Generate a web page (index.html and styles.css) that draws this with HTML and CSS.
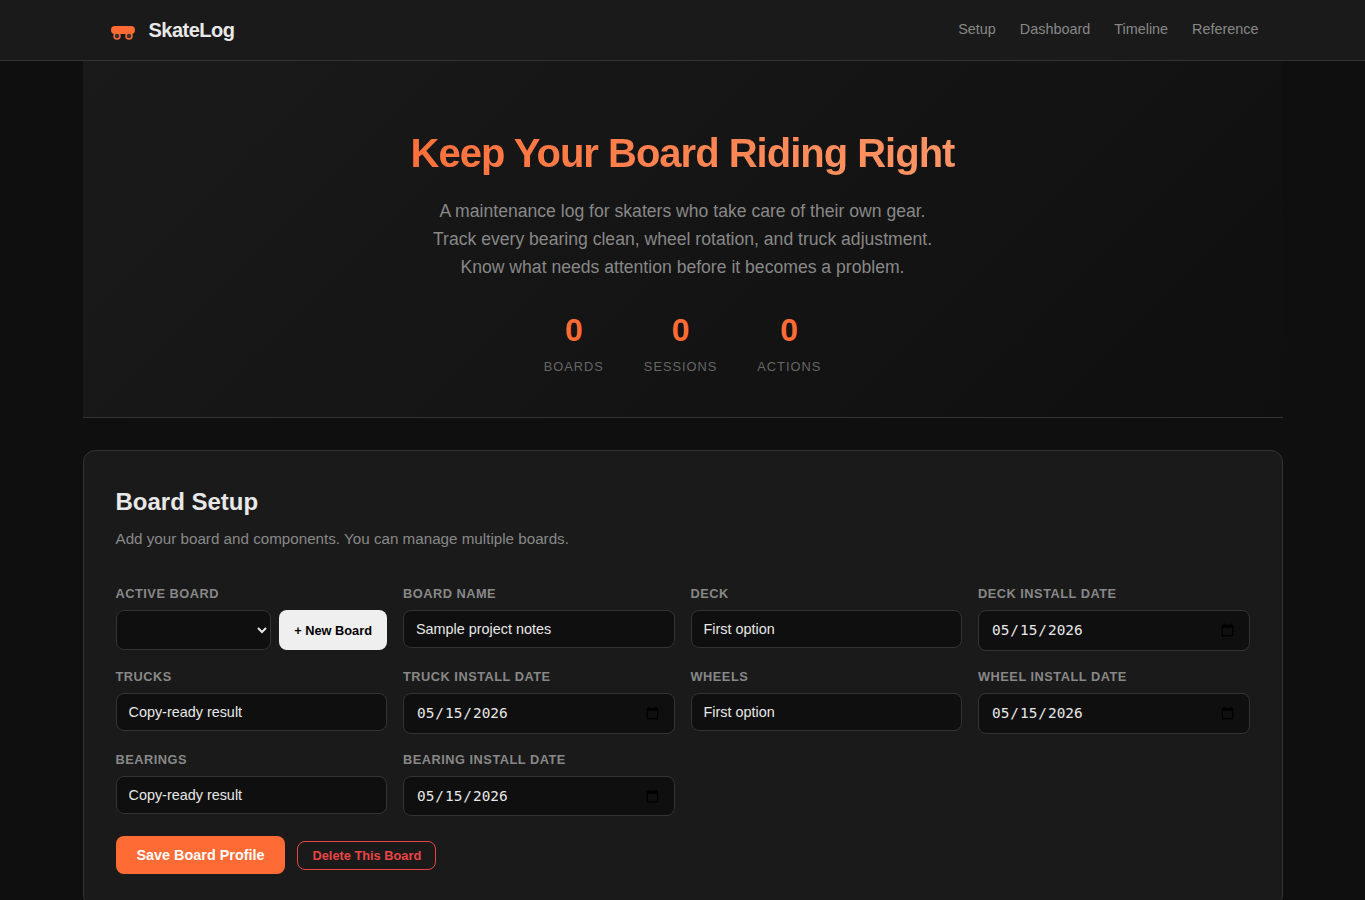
FILE: index.html
```html
<!DOCTYPE html>
<html lang="en">
<head>
  <meta charset="UTF-8">
  <meta name="viewport" content="width=device-width, initial-scale=1.0">
  <title>SkateLog</title>
  <link rel="stylesheet" href="styles.css">
</head>
<body>
  <header class="site-header">
    <div class="header-inner">
      <div class="logo">
        <svg class="logo-icon" width="28" height="28" viewBox="0 0 28 28">
          <rect x="2" y="10" width="24" height="8" rx="4" fill="#ff6b35"/>
          <circle cx="8" cy="20" r="3" fill="#333" stroke="#ff6b35" stroke-width="1.5"/>
          <circle cx="20" cy="20" r="3" fill="#333" stroke="#ff6b35" stroke-width="1.5"/>
        </svg>
        <span class="logo-text">SkateLog</span>
      </div>
      <nav class="nav">
        <a href="#setup">Setup</a>
        <a href="#dashboard">Dashboard</a>
        <a href="#timeline">Timeline</a>
        <a href="#reference">Reference</a>
      </nav>
    </div>
  </header>

  <main>
    <section class="hero">
      <h1>Keep Your Board Riding Right</h1>
      <p class="hero-text">A maintenance log for skaters who take care of their own gear.<br>Track every bearing clean, wheel rotation, and truck adjustment.<br>Know what needs attention before it becomes a problem.</p>
      <div class="stats">
        <div class="stat"><span class="stat-value">0</span><span class="stat-label">Boards</span></div>
        <div class="stat"><span class="stat-value">0</span><span class="stat-label">Sessions</span></div>
        <div class="stat"><span class="stat-value">0</span><span class="stat-label">Actions</span></div>
      </div>
    </section>

    <section class="panel" id="setup">
      <h2>Board Setup</h2>
      <p class="panel-desc">Add your board and components. You can manage multiple boards.</p>

      <div class="form-grid">
        <div class="field">
          <label for="board-select">Active Board</label>
          <div class="board-row">
            <select id="board-select"></select>
            <button class="btn btn-small" type="button">+ New Board</button>
          </div>
        </div>
        <div class="field">
          <label for="board-name">Board Name</label>
          <input type="text" id="board-name" value="Sample project notes">
        </div>
        <div class="field">
          <label for="deck">Deck</label>
          <input type="text" id="deck" value="First option">
        </div>
        <div class="field">
          <label for="deck-date">Deck Install Date</label>
          <input type="date" id="deck-date" value="2026-05-15">
        </div>
        <div class="field">
          <label for="trucks">Trucks</label>
          <input type="text" id="trucks" value="Copy-ready result">
        </div>
        <div class="field">
          <label for="truck-date">Truck Install Date</label>
          <input type="date" id="truck-date" value="2026-05-15">
        </div>
        <div class="field">
          <label for="wheels">Wheels</label>
          <input type="text" id="wheels" value="First option">
        </div>
        <div class="field">
          <label for="wheel-date">Wheel Install Date</label>
          <input type="date" id="wheel-date" value="2026-05-15">
        </div>
        <div class="field">
          <label for="bearings">Bearings</label>
          <input type="text" id="bearings" value="Copy-ready result">
        </div>
        <div class="field">
          <label for="bearing-date">Bearing Install Date</label>
          <input type="date" id="bearing-date" value="2026-05-15">
        </div>
      </div>

      <div class="form-actions">
        <button class="btn btn-primary" type="button">Save Board Profile</button>
        <button class="btn btn-danger" type="button">Delete This Board</button>
      </div>
    </section>
  </main>
</body>
</html>
```
FILE: styles.css
```css
* {
  box-sizing: border-box;
  margin: 0;
  padding: 0;
}

body {
  font-family: "Liberation Sans", Arial, sans-serif;
  background: #0f0f0f;
  color: #e8e8e8;
  line-height: 1.6;
  height: 100vh;
  overflow: hidden;
}

/* Header */
.site-header {
  background: #1a1a1a;
  border-bottom: 1px solid #333;
}

.header-inner {
  max-width: 1200px;
  height: 60px;
  margin: 0 auto;
  padding: 0 24px;
  display: flex;
  justify-content: space-between;
  align-items: center;
}

.logo {
  display: flex;
  align-items: center;
  gap: 12px;
  padding-left: 2px;
}

.logo-text {
  font-size: 20px;
  font-weight: 700;
  letter-spacing: -0.5px;
}

.nav {
  display: flex;
  gap: 24px;
  font-size: 14.4px;
}

.nav a {
  color: #888;
  text-decoration: none;
}

main {
  max-width: 1200px;
  margin: 0 auto;
}

/* Hero */
.hero {
  display: flex;
  flex-direction: column;
  align-items: center;
  text-align: center;
  padding: 64px 24px 40px;
  background: linear-gradient(135deg, #1a1a1a 0%, #0f0f0f 100%);
  border-bottom: 1px solid #333;
  margin-bottom: 32px;
}

.hero h1 {
  width: 640px;
  font-size: 40px;
  line-height: 1.4;
  letter-spacing: -1px;
  margin-bottom: 16px;
  background: linear-gradient(135deg, #ff6b35, #ff9a6c);
  -webkit-background-clip: text;
  background-clip: text;
  -webkit-text-fill-color: transparent;
}

.hero-text {
  font-size: 17.6px;
  color: #888;
  margin-bottom: 24px;
}

.stats {
  display: flex;
  justify-content: center;
  gap: 40px;
}

.stat {
  display: flex;
  flex-direction: column;
}

.stat-value {
  font-size: 32px;
  font-weight: 700;
  color: #ff6b35;
}

.stat-label {
  font-size: 12.8px;
  color: #666;
  text-transform: uppercase;
  letter-spacing: 1px;
}

/* Board setup */
.panel {
  background: #1a1a1a;
  border: 1px solid #333;
  border-radius: 12px;
  padding: 32px;
}

.panel h2 {
  font-size: 24px;
  margin-bottom: 6px;
}

.panel-desc {
  font-size: 15.2px;
  color: #888;
  margin-bottom: 32px;
}

.form-grid {
  display: grid;
  grid-template-columns: repeat(4, 1fr);
  gap: 16px;
  margin-bottom: 20px;
}

.field {
  display: flex;
  flex-direction: column;
  gap: 6px;
}

.field label {
  font-size: 12.8px;
  font-weight: 600;
  color: #888;
  text-transform: uppercase;
  letter-spacing: 0.5px;
}

.field input,
.field select {
  background: #0f0f0f;
  border: 1px solid #333;
  border-radius: 8px;
  padding: 10px 12px;
  color: #e8e8e8;
  font-size: 14.4px;
}

.field input[type="text"] {
  font-family: inherit;
}

.board-row {
  display: flex;
  gap: 8px;
}

.board-row select {
  flex: 1;
  min-width: 0;
}

/* Buttons */
.btn {
  border: none;
  border-radius: 8px;
  font-family: inherit;
  font-weight: 600;
  cursor: pointer;
}

.btn-small {
  height: 40px;
  padding: 0 15px;
  font-size: 12.8px;
  background: #efefef;
  color: #000;
}

.form-actions {
  display: flex;
  align-items: center;
  gap: 12px;
}

.btn-primary {
  height: 38px;
  padding: 0 21px;
  font-size: 14.4px;
  background: #ff6b35;
  color: #fff;
}

.btn-danger {
  padding: 6px 14px;
  font-size: 12.8px;
  background: transparent;
  border: 1px solid #e84545;
  color: #e84545;
}
```
